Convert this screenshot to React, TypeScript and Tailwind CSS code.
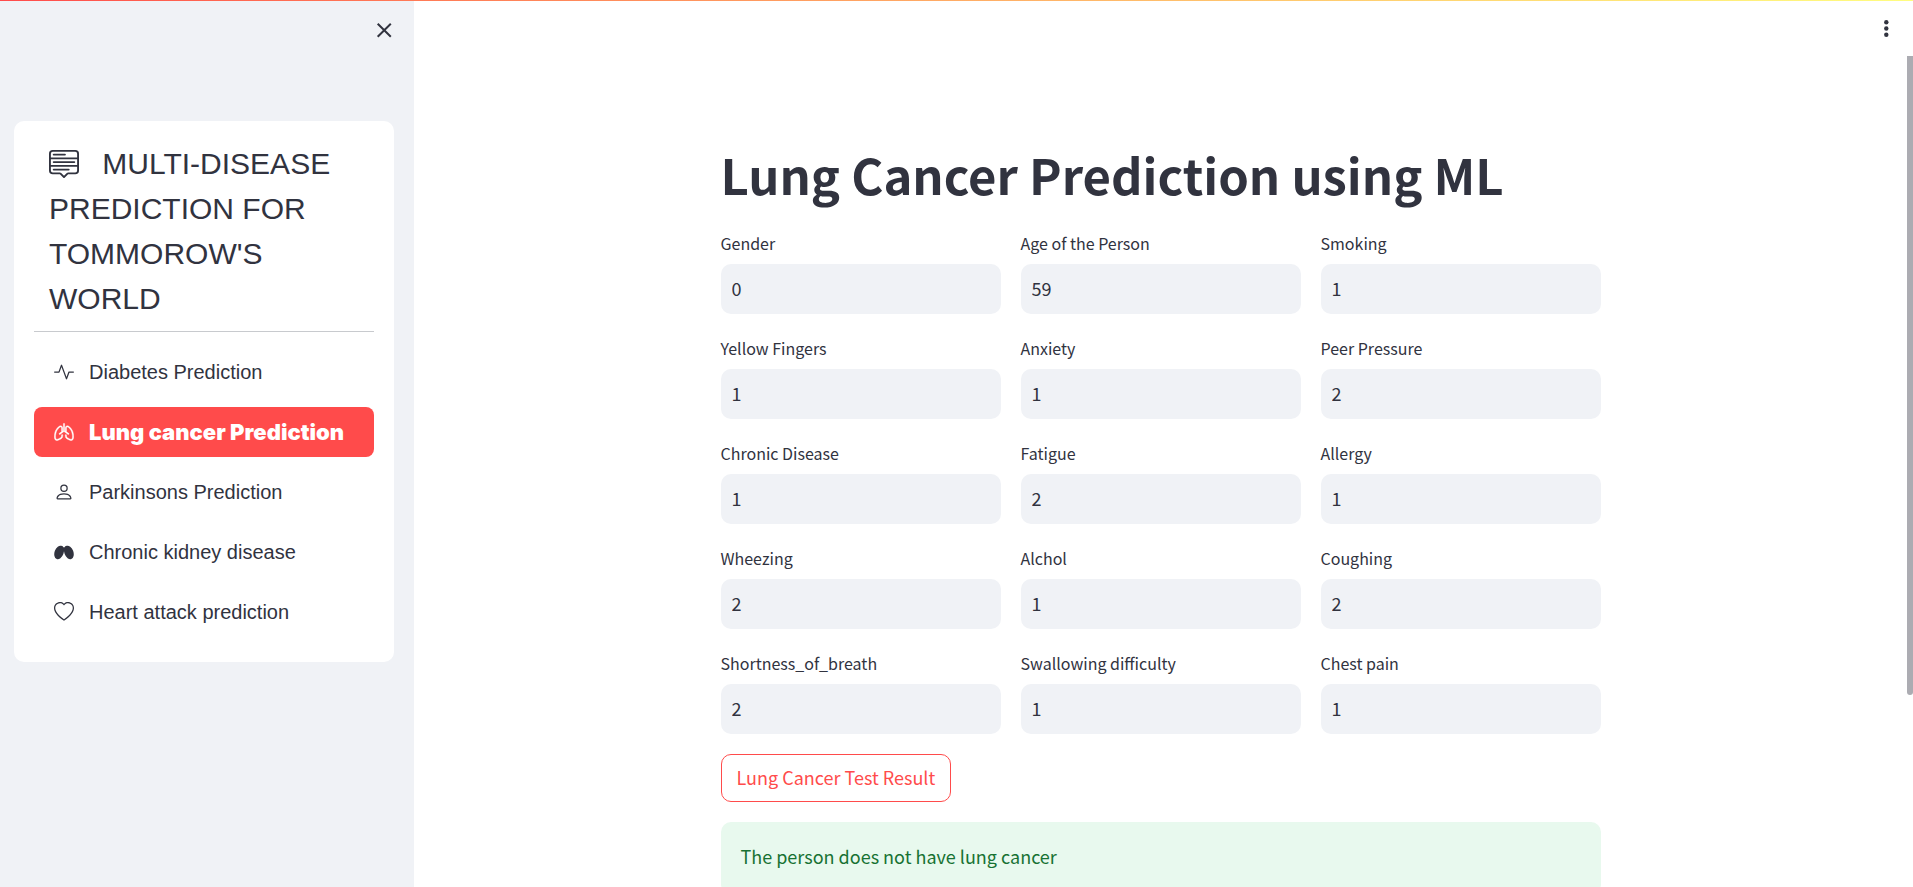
import { useState } from "react";
import type { ReactNode } from "react";
import clsx from "clsx";
import { BsActivity, BsHeart, BsLungs, BsMenuUp } from "react-icons/bs";

const PersonIcon = () => (
  <svg width="20" height="20" viewBox="0 0 16 16" fill="currentColor">
    <path d="M8 8a3 3 0 1 0 0-6 3 3 0 0 0 0 6zm2-3a2 2 0 1 1-4 0 2 2 0 0 1 4 0zm4 8c0 1-1 1-1 1H3s-1 0-1-1 1-4 6-4 6 3 6 4zm-1-.004c-.001-.246-.154-.986-.832-1.664C11.516 10.68 10.289 10 8 10c-2.29 0-3.516.68-4.168 1.332-.678.678-.83 1.418-.832 1.664h10z" />
  </svg>
);

const KidneysIcon = () => (
  <svg width="20" height="20" viewBox="0 0 20 20" fill="currentColor">
    <ellipse cx="5.1" cy="10.4" rx="4.5" ry="7" transform="rotate(20 5.1 10.4)" />
    <ellipse cx="14.9" cy="10.4" rx="4.5" ry="7" transform="rotate(-20 14.9 10.4)" />
    <path d="M7 4 Q9 4.2 10 5.8 11 4.2 13 4L13 12Q12 9.2 10 9.2 8 9.2 7 12Z" />
  </svg>
);

const diseases: { label: string; icon: ReactNode }[] = [
  { label: "Diabetes Prediction", icon: <BsActivity size={20} /> },
  { label: "Lung cancer Prediction", icon: <BsLungs size={20} strokeWidth={0.3} /> },
  { label: "Parkinsons Prediction", icon: <PersonIcon /> },
  { label: "Chronic kidney disease", icon: <KidneysIcon /> },
  { label: "Heart attack prediction", icon: <BsHeart size={20} /> },
];

const fields = [
  { id: "gender", label: "Gender", value: "0" },
  { id: "age", label: "Age of the Person", value: "59" },
  { id: "smoking", label: "Smoking", value: "1" },
  { id: "yellow-fingers", label: "Yellow Fingers", value: "1" },
  { id: "anxiety", label: "Anxiety", value: "1" },
  { id: "peer-pressure", label: "Peer Pressure", value: "2" },
  { id: "chronic-disease", label: "Chronic Disease", value: "1" },
  { id: "fatigue", label: "Fatigue", value: "2" },
  { id: "allergy", label: "Allergy", value: "1" },
  { id: "wheezing", label: "Wheezing", value: "2" },
  { id: "alcohol", label: "Alchol", value: "1" },
  { id: "coughing", label: "Coughing", value: "2" },
  { id: "breath", label: "Shortness_of_breath", value: "2" },
  { id: "swallowing", label: "Swallowing difficulty", value: "1" },
  { id: "chest-pain", label: "Chest pain", value: "1" },
];

const Sidebar = () => {
  const [active, setActive] = useState("Lung cancer Prediction");

  return (
    <aside className="w-[414px] shrink-0 bg-[#f0f2f6] pl-3.5 pr-5">
      <div className="flex h-[121px] items-start justify-end pt-5">
        <button type="button" aria-label="Close sidebar" className="-mr-px p-0.5">
          <svg width="18" height="18" viewBox="0 0 18 18" stroke="currentColor" strokeWidth="2">
            <path d="M2.7 1.7 15.8 14.8M15.8 1.7 2.7 14.8" />
          </svg>
        </button>
      </div>
      <div className="rounded-[10px] bg-white p-5 font-['Liberation_Sans',Arial,sans-serif]">
        <h2 className="px-[15px] pb-2.5 text-[30px] leading-[45px]">
          <BsMenuUp size={30} className="mr-[15px] inline-block align-[-4px]" /> MULTI-DISEASE
          PREDICTION FOR TOMMOROW'S WORLD
        </h2>
        <hr className="border-[#c8cace]" />
        <nav className="mt-[15px] mb-[5px] flex flex-col gap-2.5">
          {diseases.map(({ label, icon }) => (
            <a
              key={label}
              href="#"
              onClick={() => setActive(label)}
              className={clsx(
                "flex h-[50px] items-center gap-[15px] rounded-lg px-5",
                active === label
                  ? "bg-[#ff4b4b] font-['Inter',sans-serif] text-[22px] font-black text-white"
                  : "text-xl",
              )}
            >
              {icon}
              <span className="whitespace-nowrap">{label}</span>
            </a>
          ))}
        </nav>
      </div>
    </aside>
  );
};

const Field = ({ id, label, value }: { id: string; label: string; value: string }) => (
  <div>
    <label htmlFor={id} className="mb-[7px] block h-7 text-base leading-7">
      {label}
    </label>
    <input
      id={id}
      type="text"
      defaultValue={value}
      className="h-[50px] w-full rounded-[10px] bg-[#f0f2f6] px-[11px] pb-0.5 text-lg outline-none"
    />
  </div>
);

const PredictionForm = () => (
  <div className="mx-auto w-full max-w-[920px] px-5 pt-[141px]">
    <h1 className="mb-[22px] text-[49px] leading-[66px] font-bold">
      Lung Cancer Prediction using ML
    </h1>
    <div className="grid grid-cols-3 gap-5">
      {fields.map((field) => (
        <Field key={field.id} {...field} />
      ))}
    </div>
    <button
      type="button"
      className="mt-5 block h-12 rounded-[10px] border border-[#ff4b4b] px-[15px] pb-0.5 text-lg text-[#ff4b4b]"
    >
      Lung Cancer Test Result
    </button>
    <div
      role="alert"
      className="mt-5 rounded-[10px] bg-[#e8f9ee] px-5 pt-[18px] pb-[22px] text-lg leading-8 text-[#177233]"
    >
      The person does not have lung cancer
    </div>
  </div>
);

export default function App() {
  return (
    <div className="relative flex h-screen overflow-hidden bg-white font-['Noto_Sans_CJK_JP',sans-serif] text-[#31333f]">
      <Sidebar />
      <main className="min-w-0 flex-1">
        <PredictionForm />
      </main>
      <div className="w-1.5 shrink-0 pt-14">
        <div className="h-[72vh] rounded-b-[3px] bg-[#acacb2]" />
      </div>
      <div className="absolute inset-x-0 top-0 h-px bg-linear-to-r from-[#ff4b4b] to-[#fffd80]" />
      <button type="button" aria-label="Main menu" className="absolute top-4 right-3.5 px-1">
        <svg width="18" height="25" viewBox="0 0 18 25" fill="currentColor">
          <circle cx="9.3" cy="6.3" r="2.2" />
          <circle cx="9.3" cy="12.5" r="2.2" />
          <circle cx="9.3" cy="18.7" r="2.2" />
        </svg>
      </button>
    </div>
  );
}
